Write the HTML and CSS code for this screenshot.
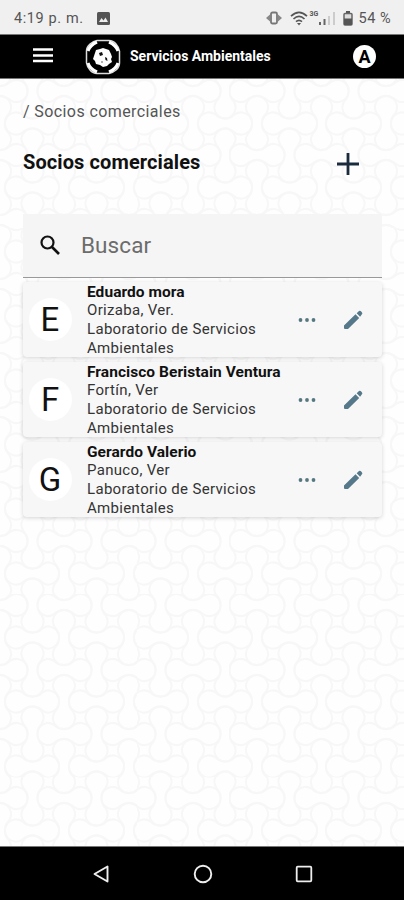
FILE: index.html
```html
<!DOCTYPE html>
<html lang="es">
<head>
  <meta charset="UTF-8" />
  <meta name="viewport" content="width=device-width, initial-scale=1.0" />
  <title>Servicios Ambientales</title>
  <link rel="stylesheet" href="styles.css">
</head>
<body>
  <div class="status-bar">
    <span class="time">4:19 p. m.</span>
    <svg class="photo" width="13" height="13" viewBox="0 0 13 13"><rect width="13" height="13" rx="1.5" fill="#555"/><path d="M2 10l2.500-4 2 2.500 2-3L11 10z" fill="#eee"/></svg>
    <svg class="vibrate" width="16" height="14" viewBox="0 0 16 14"><rect x="5" y="1.500" width="6" height="11" rx="1.500" fill="none" stroke="#777" stroke-width="1.800"/><path d="M4 3.500v7L0 7zM12 3.500v7L16 7z" fill="#888"/></svg>
    <svg class="wifi" width="18" height="15" viewBox="0 0 18 15" fill="none" stroke="#555" stroke-width="1.700"><path d="M1 5.200Q9-2.500 17 5.200M3.500 8Q9 2.800 14.500 8M6 10.600Q9 8 12 10.600"/><path d="M7 12h4l-2 2.500z" fill="#555" stroke="none"/></svg>
    <span class="net">3G</span>
    <svg class="signal" width="17" height="14" viewBox="0 0 17 14"><path d="M0 11h2v3H0zM4.500 8h2v6h-2z" fill="#666"/><path d="M9 5h2v9H9zM14 1h2v13h-2z" fill="#ccc"/></svg>
    <svg class="battery" width="10" height="15" viewBox="0 0 10 15"><path d="M3 0h4v2H3z" fill="#555"/><rect x="1" y="2.500" width="8" height="11.500" rx="1" fill="#ddd" stroke="#666" stroke-width="1.500"/><path d="M1 7.500h8V14H1z" fill="#555"/></svg>
    <span class="percent">54 %</span>
  </div>

  <header class="app-bar">
    <svg class="menu" width="20" height="15" viewBox="0 0 20 15"><path d="M0 1.500h20M0 7.500h20M0 13h20" stroke="#fff" stroke-width="2.500"/></svg>
    <svg class="logo" width="36" height="36" viewBox="0 0 36 36">
      <path d="M12 1.500h12q4 0 7 3.500t3.500 7v12q0 4-3.500 7t-7 3.500H12q-4 0-7-3.500T1.500 24V12Q1.500 8 5 5t7-3.500z" fill="none" stroke="#ddd" stroke-width="1.500"/>
      <path d="M3 12q2-6 9-9M24 3q7 3 9 9M33 24q-2 6-9 9M12 33q-7-3-9-9" fill="none" stroke="#fff" stroke-width="3"/>
      <path d="M11 11l4-1 3-1 3 1 3 1 2 4 1 3-1 2 1 3-3 2-2 2-4 1-3-2-4-1-1-3-2-2 1-3 1-3z" fill="#fff"/>
      <path d="M14 14l3-1 1 3-3 1zM20 18l2 1 .5 3-2-1z" fill="#111"/>
      <circle cx="17" cy="23" r="1" fill="#999"/>
    </svg>
    <span class="app-name">Servicios Ambientales</span>
    <div class="account">A</div>
  </header>

  <main>
    <div class="breadcrumb">/ Socios comerciales</div>
    <div class="heading">
      <h1>Socios comerciales</h1>
      <svg width="22" height="22" viewBox="0 0 22 22"><path d="M11 0v22M0 11h22" stroke="#1b2a3c" stroke-width="2.800"/></svg>
    </div>

    <div class="search">
      <svg width="20" height="20" viewBox="0 0 20 20" fill="none" stroke="#111"><circle cx="7.500" cy="7.500" r="6" stroke-width="2.200"/><path d="M12 12l7 7" stroke-width="2.700"/></svg>
      <span>Buscar</span>
    </div>

    <div class="card">
      <div class="avatar">E</div>
      <div class="info">
        <div class="name">Eduardo mora</div>
        <div>Orizaba, Ver.</div>
        <div>Laboratorio de Servicios Ambientales</div>
      </div>
      <svg class="dots" width="18" height="4" viewBox="0 0 18 4" fill="#55777f"><circle cx="2.500" cy="2" r="1.900"/><circle cx="9" cy="2" r="1.900"/><circle cx="15.500" cy="2" r="1.900"/></svg>
      <svg class="edit" width="20" height="20" viewBox="0 0 20 20" fill="#55788a"><path d="M1 15.500L12.500 4.300l3.700 3.700L5 19H2q-1 0-1-1zM13.700 3.200L16 1q1-.8 2 .2l1 1.200q.8 1-.1 1.900l-1.800 2.400z"/></svg>
    </div>

    <div class="card">
      <div class="avatar">F</div>
      <div class="info">
        <div class="name">Francisco Beristain Ventura</div>
        <div>Fortín, Ver</div>
        <div>Laboratorio de Servicios Ambientales</div>
      </div>
      <svg class="dots" width="18" height="4" viewBox="0 0 18 4" fill="#55777f"><circle cx="2.500" cy="2" r="1.900"/><circle cx="9" cy="2" r="1.900"/><circle cx="15.500" cy="2" r="1.900"/></svg>
      <svg class="edit" width="20" height="20" viewBox="0 0 20 20" fill="#55788a"><path d="M1 15.500L12.500 4.300l3.700 3.700L5 19H2q-1 0-1-1zM13.700 3.200L16 1q1-.8 2 .2l1 1.200q.8 1-.1 1.900l-1.800 2.400z"/></svg>
    </div>

    <div class="card">
      <div class="avatar">G</div>
      <div class="info">
        <div class="name">Gerardo Valerio</div>
        <div>Panuco, Ver</div>
        <div>Laboratorio de Servicios Ambientales</div>
      </div>
      <svg class="dots" width="18" height="4" viewBox="0 0 18 4" fill="#55777f"><circle cx="2.500" cy="2" r="1.900"/><circle cx="9" cy="2" r="1.900"/><circle cx="15.500" cy="2" r="1.900"/></svg>
      <svg class="edit" width="20" height="20" viewBox="0 0 20 20" fill="#55788a"><path d="M1 15.500L12.500 4.300l3.700 3.700L5 19H2q-1 0-1-1zM13.700 3.200L16 1q1-.8 2 .2l1 1.200q.8 1-.1 1.900l-1.800 2.400z"/></svg>
    </div>
  </main>

  <nav class="nav-bar">
    <svg width="18" height="20" viewBox="0 0 18 20"><path d="M15.500 2.500v15L2.500 10z" fill="none" stroke="#eee" stroke-width="1.900" stroke-linejoin="round"/></svg>
    <svg width="20" height="20" viewBox="0 0 20 20"><circle cx="10" cy="10" r="8.300" fill="none" stroke="#eee" stroke-width="1.900"/></svg>
    <svg width="18" height="18" viewBox="0 0 18 18"><rect x="1.700" y="1.700" width="14.600" height="14.600" rx="1" fill="none" stroke="#eee" stroke-width="1.800"/></svg>
  </nav>
</body>
</html>
```
FILE: styles.css
```css
* {
  box-sizing: border-box;
}
body {
  margin: 0;
  height: 900px;
  display: flex;
  flex-direction: column;
  font-family: Roboto, "Liberation Sans", sans-serif;
  color: #222;
  background: #fefefe;
  overflow: hidden;
}
svg {
  flex: none;
}
.status-bar {
  height: 34px;
  background: #f0f0f0;
  display: flex;
  align-items: center;
  padding: 2px 13px 0 14px;
  font-size: 14.500px;
  color: #555;
  white-space: nowrap;
}
.time {
  width: 70px;
  letter-spacing: 0.6px;
}
.photo {
  margin-left: 13px;
}
.vibrate {
  margin-left: auto;
}
.wifi {
  margin-left: 8px;
}
.net {
  font-size: 7px;
  font-weight: bold;
  margin: -9px 0 0 1px;
  width: 10px;
}
.battery {
  margin: 0 5px 0 7px;
}
.percent {
  letter-spacing: 0.5px;
}
.app-bar {
  height: 45px;
  background: #000;
  border-top: 1px solid #777;
  border-bottom: 1px solid #777;
  display: flex;
  align-items: center;
  padding: 0 28px 2px 33px;
  color: #fff;
}
.logo {
  margin-left: 32px;
  margin-top: 2px;
}
.app-name {
  margin-left: 9px;
  font-size: 14px;
  font-weight: bold;
  white-space: nowrap;
}
.account {
  margin-left: auto;
  margin-top: 2px;
  width: 23px;
  height: 23px;
  border-radius: 50%;
  background: #fff;
  color: #000;
  font-size: 18px;
  font-weight: bold;
  line-height: 23px;
  text-align: center;
}
main {
  flex: 1;
  padding: 22px 22px 0 23px;
  background: #fefefe url("data:image/svg+xml,%3Csvg xmlns='http://www.w3.org/2000/svg' xmlns:xlink='http://www.w3.org/1999/xlink' width='64.3' height='64.3' viewBox='0 0 64.3 64.3'%3E%3Cdefs%3E%3Cpath id='d' d='M-10-9C-5-3.500 5-3.500 10-9A11 11 0 1 1 10 9C5 3.500-5 3.500-10 9A11 11 0 1 1-10-9z'/%3E%3C/defs%3E%3Cg fill='none' stroke='%23f7f7f7' stroke-width='2'%3E%3Cuse xlink:href='%23d' x='32.150' y='32.150'/%3E%3Cuse xlink:href='%23d'/%3E%3Cuse xlink:href='%23d' x='64.300'/%3E%3Cuse xlink:href='%23d' y='64.300'/%3E%3Cuse xlink:href='%23d' x='64.300' y='64.300'/%3E%3Cuse xlink:href='%23d' transform='translate(32.150 0) rotate(90)'/%3E%3Cuse xlink:href='%23d' transform='translate(32.150 64.300) rotate(90)'/%3E%3Cuse xlink:href='%23d' transform='translate(0 32.150) rotate(90)'/%3E%3Cuse xlink:href='%23d' transform='translate(64.300 32.150) rotate(90)'/%3E%3C/g%3E%3C/svg%3E") 0 12px;
}
.breadcrumb {
  margin-top: 1px;
  font-size: 16px;
  line-height: 20px;
  letter-spacing: 0.4px;
  color: #555;
}
.heading {
  display: flex;
  align-items: center;
  justify-content: space-between;
  height: 30px;
  margin-top: 27px;
  padding-right: 23px;
}
h1 {
  margin: -4px 0 0;
  font-size: 20px;
  font-weight: bold;
  letter-spacing: 0.1px;
  color: #111;
}
.search {
  height: 64px;
  margin-top: 35px;
  display: flex;
  align-items: center;
  padding: 0 0 2px 17px;
  background: #f5f5f5;
  border-bottom: 1.500px solid #999;
  font-size: 22.500px;
  letter-spacing: 0.1px;
  color: #6c6c6c;
}
.search span {
  margin-left: 21px;
}
.card {
  height: 75px;
  margin-bottom: 5px;
  display: flex;
  align-items: center;
  padding-right: 19px;
  background: #f7f7f7;
  border-radius: 4px;
  box-shadow: 0 1px 4px rgba(0,0,0,0.17);
}
.search + .card {
  margin-top: 4px;
}
.avatar {
  width: 43px;
  height: 43px;
  margin-left: 6px;
  padding-right: 1px;
  border-radius: 50%;
  background: #fff;
  color: #111;
  font-size: 33px;
  line-height: 43px;
  text-align: center;
}
.info {
  width: 200px;
  margin: 1px 0 0 15px;
  font-size: 15px;
  line-height: 18.700px;
  letter-spacing: 0.32px;
  color: #333;
}
.info div:last-child {
  width: 175px;
}
.info .name {
  font-size: 15.500px;
  font-weight: bold;
  letter-spacing: 0.05px;
  color: #111;
  white-space: nowrap;
}
.dots {
  margin-left: 11px;
}
.edit {
  margin-left: auto;
  margin-top: 1px;
}
.nav-bar {
  height: 54px;
  background: #000;
  border-top: 1px solid #777;
  display: flex;
  align-items: center;
  justify-content: space-between;
  padding: 0 91px 0 92px;
}
```
